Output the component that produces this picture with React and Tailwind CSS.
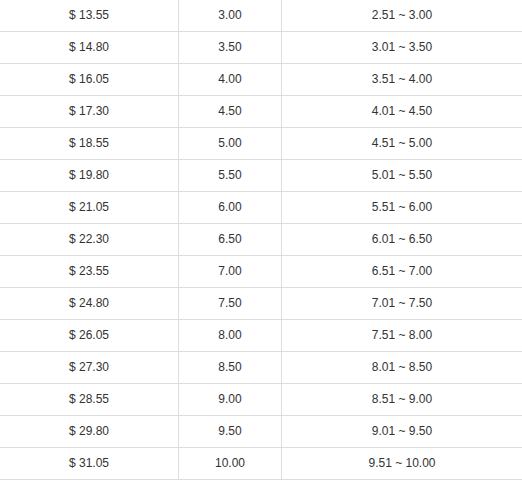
import React from "react";

const rows = Array.from({ length: 15 }, (_, i) => {
  const weight = 3 + i * 0.5;
  return {
    price: (13.55 + i * 1.25).toFixed(2),
    weight: weight.toFixed(2),
    range: `${(weight - 0.49).toFixed(2)} ~ ${weight.toFixed(2)}`,
  };
});

const App = () => {
  return (
    <div className="w-[522px] h-[483px] overflow-hidden bg-white font-['Liberation_Sans',Arial,sans-serif] text-[12px] text-[#333]">
      {rows.map((row) => (
        <div
          key={row.weight}
          className="grid grid-cols-[179px_103px_1fr] h-8 text-center leading-[31px]"
        >
          <div className="border-b border-r border-[#ddd]">$ {row.price}</div>
          <div className="border-b border-r border-[#ddd]">{row.weight}</div>
          <div className="border-b border-[#ddd]">{row.range}</div>
        </div>
      ))}
    </div>
  );
};

export default App;
